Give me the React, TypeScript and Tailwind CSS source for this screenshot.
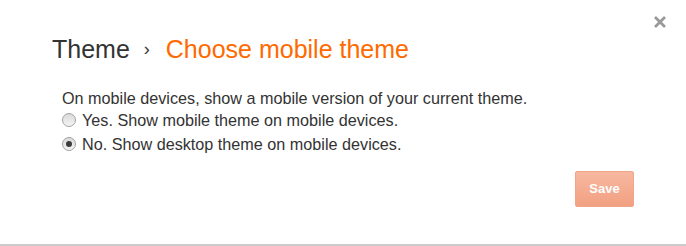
import React, { useState } from "react";

const font = { fontFamily: '"Liberation Sans", Arial, sans-serif' };

function Radio({ checked }: { checked: boolean }) {
  return (
    <span className="relative inline-flex h-[14px] w-[14px] shrink-0 items-center justify-center rounded-full border border-[#a2a2a2] bg-gradient-to-b from-[#dadada] to-[#f4f4f4]">
      {checked && <span className="h-[6px] w-[6px] rounded-full bg-[#3c3c3c]" />}
    </span>
  );
}

export default function App() {
  const [mobile, setMobile] = useState(false);

  return (
    <div className="relative h-[246px] w-full border-b-2 border-[#cccccc] bg-white" style={font}>
      {/* bouton fermer */}
      <button className="absolute right-[19px] top-[15px] text-[#9a9a9a]">
        <svg width="14" height="14" viewBox="0 0 14 14">
          <path d="M2 2 L12 12 M12 2 L2 12" stroke="currentColor" strokeWidth="2.8" />
        </svg>
      </button>

      <div className="pl-[52px] pr-[52px] pt-[34px]">
        <h2 className="flex items-center text-[25px] leading-[30px] text-[#333333]">
          <span>Theme</span>
          <span className="ml-[14px] mr-[16px] text-[18px]">›</span>
          <span className="text-[#ff6a00]">Choose mobile theme</span>
        </h2>

        <div className="mt-[24px] pl-[10px] text-[16.2px] text-[#333333]">
          <p className="leading-[20px]">On mobile devices, show a mobile version of your current theme.</p>
          <label className="flex h-[24px] items-center gap-[6px] leading-[24px]" onClick={() => setMobile(true)}>
            <Radio checked={mobile} />
            <span>Yes. Show mobile theme on mobile devices.</span>
          </label>
          <label className="flex h-[24px] items-center gap-[6px] leading-[24px]" onClick={() => setMobile(false)}>
            <Radio checked={!mobile} />
            <span>No. Show desktop theme on mobile devices.</span>
          </label>
        </div>

        <div className="mt-[15px] flex justify-end">
          <button className="h-[36px] w-[59px] rounded-[2px] border border-[#f2a488] bg-gradient-to-b from-[#f7b8a0] to-[#f2a082] text-[13px] font-bold text-white">
            Save
          </button>
        </div>
      </div>
    </div>
  );
}
